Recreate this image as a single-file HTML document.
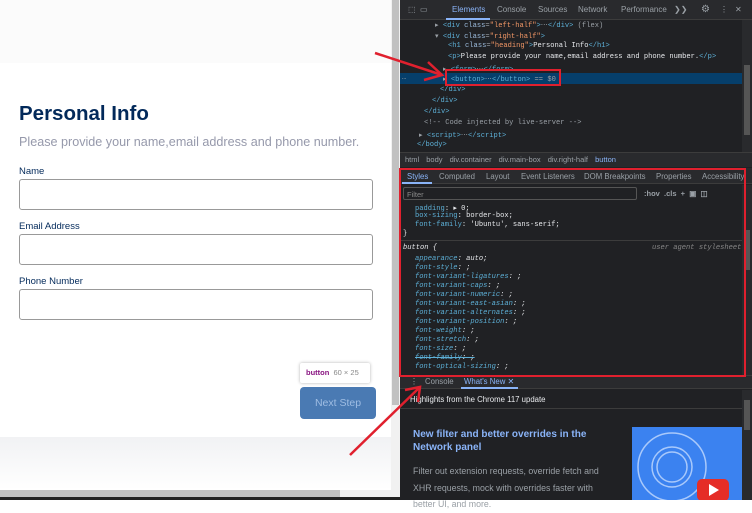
<!DOCTYPE html>
<html><head><style>
*{margin:0;padding:0;box-sizing:border-box}
body{width:752px;height:500px;overflow:hidden;position:relative;background:#fff;font-family:"Liberation Sans",sans-serif}
.abs{position:absolute;white-space:nowrap}
.m{position:absolute;font-family:"Liberation Mono",monospace;font-size:7.1px;white-space:pre;color:#9aa0a6}
.t{color:#5db0d7}.a{color:#9bbbdc}.v{color:#f29766}.w{color:#e8eaed}
.dt{color:#9aa0a6;font-size:8px}
.i{font-style:italic;color:#5db0d7}
</style></head><body>
<div class="abs" style="left:0;top:0;width:391px;height:63px;background:#fbfbfb"></div>
<div class="abs" style="left:0;top:437px;width:391px;height:53px;background:linear-gradient(#f1f2f4,#fff)"></div>
<div class="abs" style="left:391px;top:0;width:9px;height:490px;background:#f1f1f1"></div>
<div class="abs" style="left:392px;top:0;width:7px;height:405px;background:#c1c1c1"></div>
<div class="abs" style="left:0;top:490px;width:400px;height:10px;background:#f1f1f1"></div>
<div class="abs" style="left:0;top:490px;width:340px;height:7px;background:#c1c1c1"></div>
<div class="abs" style="left:0;top:497px;width:400px;height:3px;background:#222"></div>
<div class="abs" style="left:19px;top:102px;font-size:20.5px;font-weight:bold;color:#02295a">Personal Info</div>
<div class="abs" style="left:19px;top:135px;font-size:12.6px;color:#9699ab">Please provide your name,email address and phone number.</div>
<div class="abs" style="left:19px;top:166px;font-size:9.5px;color:#02295a">Name</div>
<div class="abs" style="left:19px;top:179px;width:354px;height:31px;border:1px solid #999;border-radius:3px"></div>
<div class="abs" style="left:19px;top:221px;font-size:9.5px;color:#02295a">Email Address</div>
<div class="abs" style="left:19px;top:234px;width:354px;height:31px;border:1px solid #999;border-radius:3px"></div>
<div class="abs" style="left:19px;top:276px;font-size:9.5px;color:#02295a">Phone Number</div>
<div class="abs" style="left:19px;top:289px;width:354px;height:31px;border:1px solid #999;border-radius:3px"></div>
<div class="abs" style="left:300px;top:363px;width:70px;height:20px;background:#fff;box-shadow:0 0 3px rgba(0,0,0,.3);border-radius:2px;font-size:7.5px;padding:5px 6px"><b style="color:#881280">button</b> <span style="color:#888">&nbsp;60 × 25</span></div>
<div class="abs" style="left:300px;top:387px;width:76px;height:32px;background:#4a7ab3;border-radius:4px;color:#9fbde3;font-size:10.5px;text-align:center;line-height:33px">Next Step</div>
<!-- devtools -->
<div class="abs" style="left:400px;top:0;width:352px;height:500px;background:#202124"></div>
<div class="abs" style="left:400px;top:0;width:352px;height:20px;background:#292a2d;border-bottom:1px solid #3c3c3c"></div>
<div class="abs dt" style="left:408px;top:5px">⬚ &nbsp;▭</div>
<div class="abs" style="left:452px;top:5px;font-size:8px;color:#8ab4f8">Elements</div>
<div class="abs" style="left:446px;top:18px;width:44px;height:2px;background:#8ab4f8"></div>
<div class="abs dt" style="left:497px;top:5px">Console</div>
<div class="abs dt" style="left:538px;top:5px">Sources</div>
<div class="abs dt" style="left:578px;top:5px">Network</div>
<div class="abs dt" style="left:621px;top:5px">Performance</div>
<div class="abs dt" style="left:674px;top:5px">❯❯</div>
<div class="abs dt" style="left:701px;top:4px;font-size:10px">⚙</div>
<div class="abs dt" style="left:720px;top:5px">⋮</div>
<div class="abs dt" style="left:735px;top:5px">✕</div>
<div class="m" style="left:435px;top:20px">▸ <span class="t">&lt;div</span> <span class="a">class</span>=<span class="v">"left-half"</span><span class="t">&gt;</span>⋯<span class="t">&lt;/div&gt;</span> (flex)</div>
<div class="m" style="left:435px;top:31px">▾ <span class="t">&lt;div</span> <span class="a">class</span>=<span class="v">"right-half"</span><span class="t">&gt;</span></div>
<div class="m" style="left:448px;top:42px"><span class="t">&lt;h1</span> <span class="a">class</span>=<span class="v">"heading"</span><span class="t">&gt;</span><span class="w">Personal Info</span><span class="t">&lt;/h1&gt;</span></div>
<div class="m" style="left:448px;top:53px"><span class="t">&lt;p&gt;</span><span class="w">Please provide your name,email address and phone number.</span><span class="t">&lt;/p&gt;</span></div>
<div class="m" style="left:443px;top:64px">▸ <span class="t">&lt;form&gt;</span>⋯<span class="t">&lt;/form&gt;</span></div>
<div class="abs" style="left:400px;top:73px;width:342px;height:11px;background:#063f6b"></div>
<div class="m" style="left:402px;top:74px">…</div>
<div class="m" style="left:443px;top:74px">▸ <span class="t">&lt;button&gt;</span>⋯<span class="t">&lt;/button&gt;</span> == $0</div>
<div class="m t" style="left:440px;top:86px">&lt;/div&gt;</div>
<div class="m t" style="left:432px;top:97px">&lt;/div&gt;</div>
<div class="m t" style="left:424px;top:108px">&lt;/div&gt;</div>
<div class="m" style="left:424px;top:119px">&lt;!-- Code injected by live-server --&gt;</div>
<div class="m" style="left:419px;top:130px">▸ <span class="t">&lt;script&gt;</span>⋯<span class="t">&lt;/script&gt;</span></div>
<div class="m t" style="left:417px;top:141px">&lt;/body&gt;</div>
<div class="abs" style="left:742px;top:20px;width:10px;height:132px;background:#292a2d"></div>
<div class="abs" style="left:744px;top:65px;width:6px;height:70px;background:#555"></div>
<div class="abs" style="left:400px;top:152px;width:352px;height:15px;background:#292a2d;border-top:1px solid #3c3c3c"></div>
<div class="abs" style="left:405px;top:155px;font-size:7.5px;color:#9aa0a6;word-spacing:5px">html body div.container div.main-box div.right-half <span style="color:#8ab4f8">button</span></div>
<div class="abs" style="left:400px;top:168px;width:352px;height:16px;background:#292a2d;border-bottom:1px solid #3c3c3c"></div>
<div class="abs" style="left:407px;top:172px;font-size:7.8px;color:#8ab4f8">Styles</div>
<div class="abs" style="left:402px;top:182px;width:30px;height:2px;background:#8ab4f8"></div>
<div class="abs dt" style="left:439px;top:172px;font-size:7.8px">Computed</div>
<div class="abs dt" style="left:486px;top:172px;font-size:7.8px">Layout</div>
<div class="abs dt" style="left:521px;top:172px;font-size:7.8px">Event Listeners</div>
<div class="abs dt" style="left:584px;top:172px;font-size:7.8px">DOM Breakpoints</div>
<div class="abs dt" style="left:656px;top:172px;font-size:7.8px">Properties</div>
<div class="abs dt" style="left:702px;top:172px;font-size:7.8px">Accessibility</div>
<div class="abs" style="left:403px;top:187px;width:234px;height:13px;border:1px solid #555;border-radius:2px;background:#202124;font-size:7.5px;color:#888;padding:2px 3px">Filter</div>
<div class="abs dt" style="left:644px;top:189px;font-weight:bold;font-size:7.5px">:hov &nbsp;.cls &nbsp;+ &nbsp;▣ &nbsp;◫</div>
<div class="m" style="left:415px;top:203px"><span class="t">padding</span><span class="w">: ▸ 0;</span></div>
<div class="m" style="left:415px;top:212px"><span class="t">box-sizing</span><span class="w">: border-box;</span></div>
<div class="m" style="left:415px;top:221px"><span class="t">font-family</span><span class="w">: 'Ubuntu', sans-serif;</span></div>
<div class="m w" style="left:403px;top:230px">}</div>
<div class="abs" style="left:400px;top:240px;width:342px;height:1px;background:#3c3c3c"></div>
<div class="m w" style="left:403px;top:244px;font-style:italic">button {</div>
<div class="m" style="left:652px;top:244px;color:#888;font-style:italic">user agent stylesheet</div>
<div class="m i" style="left:415px;top:255px">appearance<span class="w">: auto;</span></div>
<div class="m i" style="left:415px;top:264px">font-style<span class="w">: ;</span></div>
<div class="m i" style="left:415px;top:273px">font-variant-ligatures<span class="w">: ;</span></div>
<div class="m i" style="left:415px;top:282px">font-variant-caps<span class="w">: ;</span></div>
<div class="m i" style="left:415px;top:291px">font-variant-numeric<span class="w">: ;</span></div>
<div class="m i" style="left:415px;top:300px">font-variant-east-asian<span class="w">: ;</span></div>
<div class="m i" style="left:415px;top:309px">font-variant-alternates<span class="w">: ;</span></div>
<div class="m i" style="left:415px;top:318px">font-variant-position<span class="w">: ;</span></div>
<div class="m i" style="left:415px;top:327px">font-weight<span class="w">: ;</span></div>
<div class="m i" style="left:415px;top:336px">font-stretch<span class="w">: ;</span></div>
<div class="m i" style="left:415px;top:345px">font-size<span class="w">: ;</span></div>
<div class="m i" style="left:415px;top:354px"><s>font-family<span class="w">: ;</span></s></div>
<div class="m i" style="left:415px;top:363px">font-optical-sizing<span class="w">: ;</span></div>
<div class="abs" style="left:742px;top:185px;width:10px;height:190px;background:#292a2d"></div>
<div class="abs" style="left:744px;top:230px;width:6px;height:40px;background:#555"></div>
<div class="abs" style="left:400px;top:375px;width:352px;height:14px;background:#292a2d;border-top:1px solid #3c3c3c;border-bottom:1px solid #3c3c3c"></div>
<div class="abs dt" style="left:410px;top:377px;font-size:7.8px">⋮</div>
<div class="abs dt" style="left:425px;top:377px;font-size:7.8px">Console</div>
<div class="abs" style="left:464px;top:377px;font-size:7.8px;color:#8ab4f8">What's New ✕</div>
<div class="abs" style="left:461px;top:387px;width:57px;height:2px;background:#8ab4f8"></div>
<div class="abs" style="left:410px;top:395px;font-size:7.8px;color:#e8eaed">Highlights from the Chrome 117 update</div>
<div class="abs" style="left:400px;top:408px;width:342px;height:1px;background:#3c3c3c"></div>
<div class="abs" style="left:413px;top:428px;font-size:10px;font-weight:bold;color:#8ab4f8;line-height:13px">New filter and better overrides in the<br>Network panel</div>
<div class="abs" style="left:413px;top:463px;font-size:8.8px;color:#9aa0a6;line-height:16.5px">Filter out extension requests, override fetch and<br>XHR requests, mock with overrides faster with<br>better UI, and more.</div>
<svg class="abs" style="left:632px;top:427px" width="110" height="73"><rect width="110" height="73" fill="#3b82f0"/><g fill="none" stroke="#a9c9fb" stroke-width="1.5"><circle cx="40" cy="40" r="34"/><circle cx="40" cy="40" r="20"/><circle cx="40" cy="40" r="15"/></g><rect x="65" y="52" width="32" height="22" rx="5" fill="#e52d27"/><path d="M77 57 L87 63 L77 69Z" fill="#fff"/></svg>
<div class="abs" style="left:742px;top:390px;width:10px;height:110px;background:#292a2d"></div>
<div class="abs" style="left:744px;top:400px;width:6px;height:30px;background:#555"></div>
<div class="abs" style="left:445px;top:69px;width:116px;height:17px;border:2px solid #e0202e"></div>
<div class="abs" style="left:399px;top:168px;width:347px;height:209px;border:2px solid #e0202e"></div>
<svg class="abs" style="left:0;top:0" width="752" height="500"><g stroke="#e0202e" stroke-width="2.5" fill="none"><path d="M375 53 L442 75"/><path d="M428 62 L442 75 L424 80"/><path d="M350 455 L420 387"/><path d="M405 390 L420 387 L418 402"/></g></svg>
</body></html>
